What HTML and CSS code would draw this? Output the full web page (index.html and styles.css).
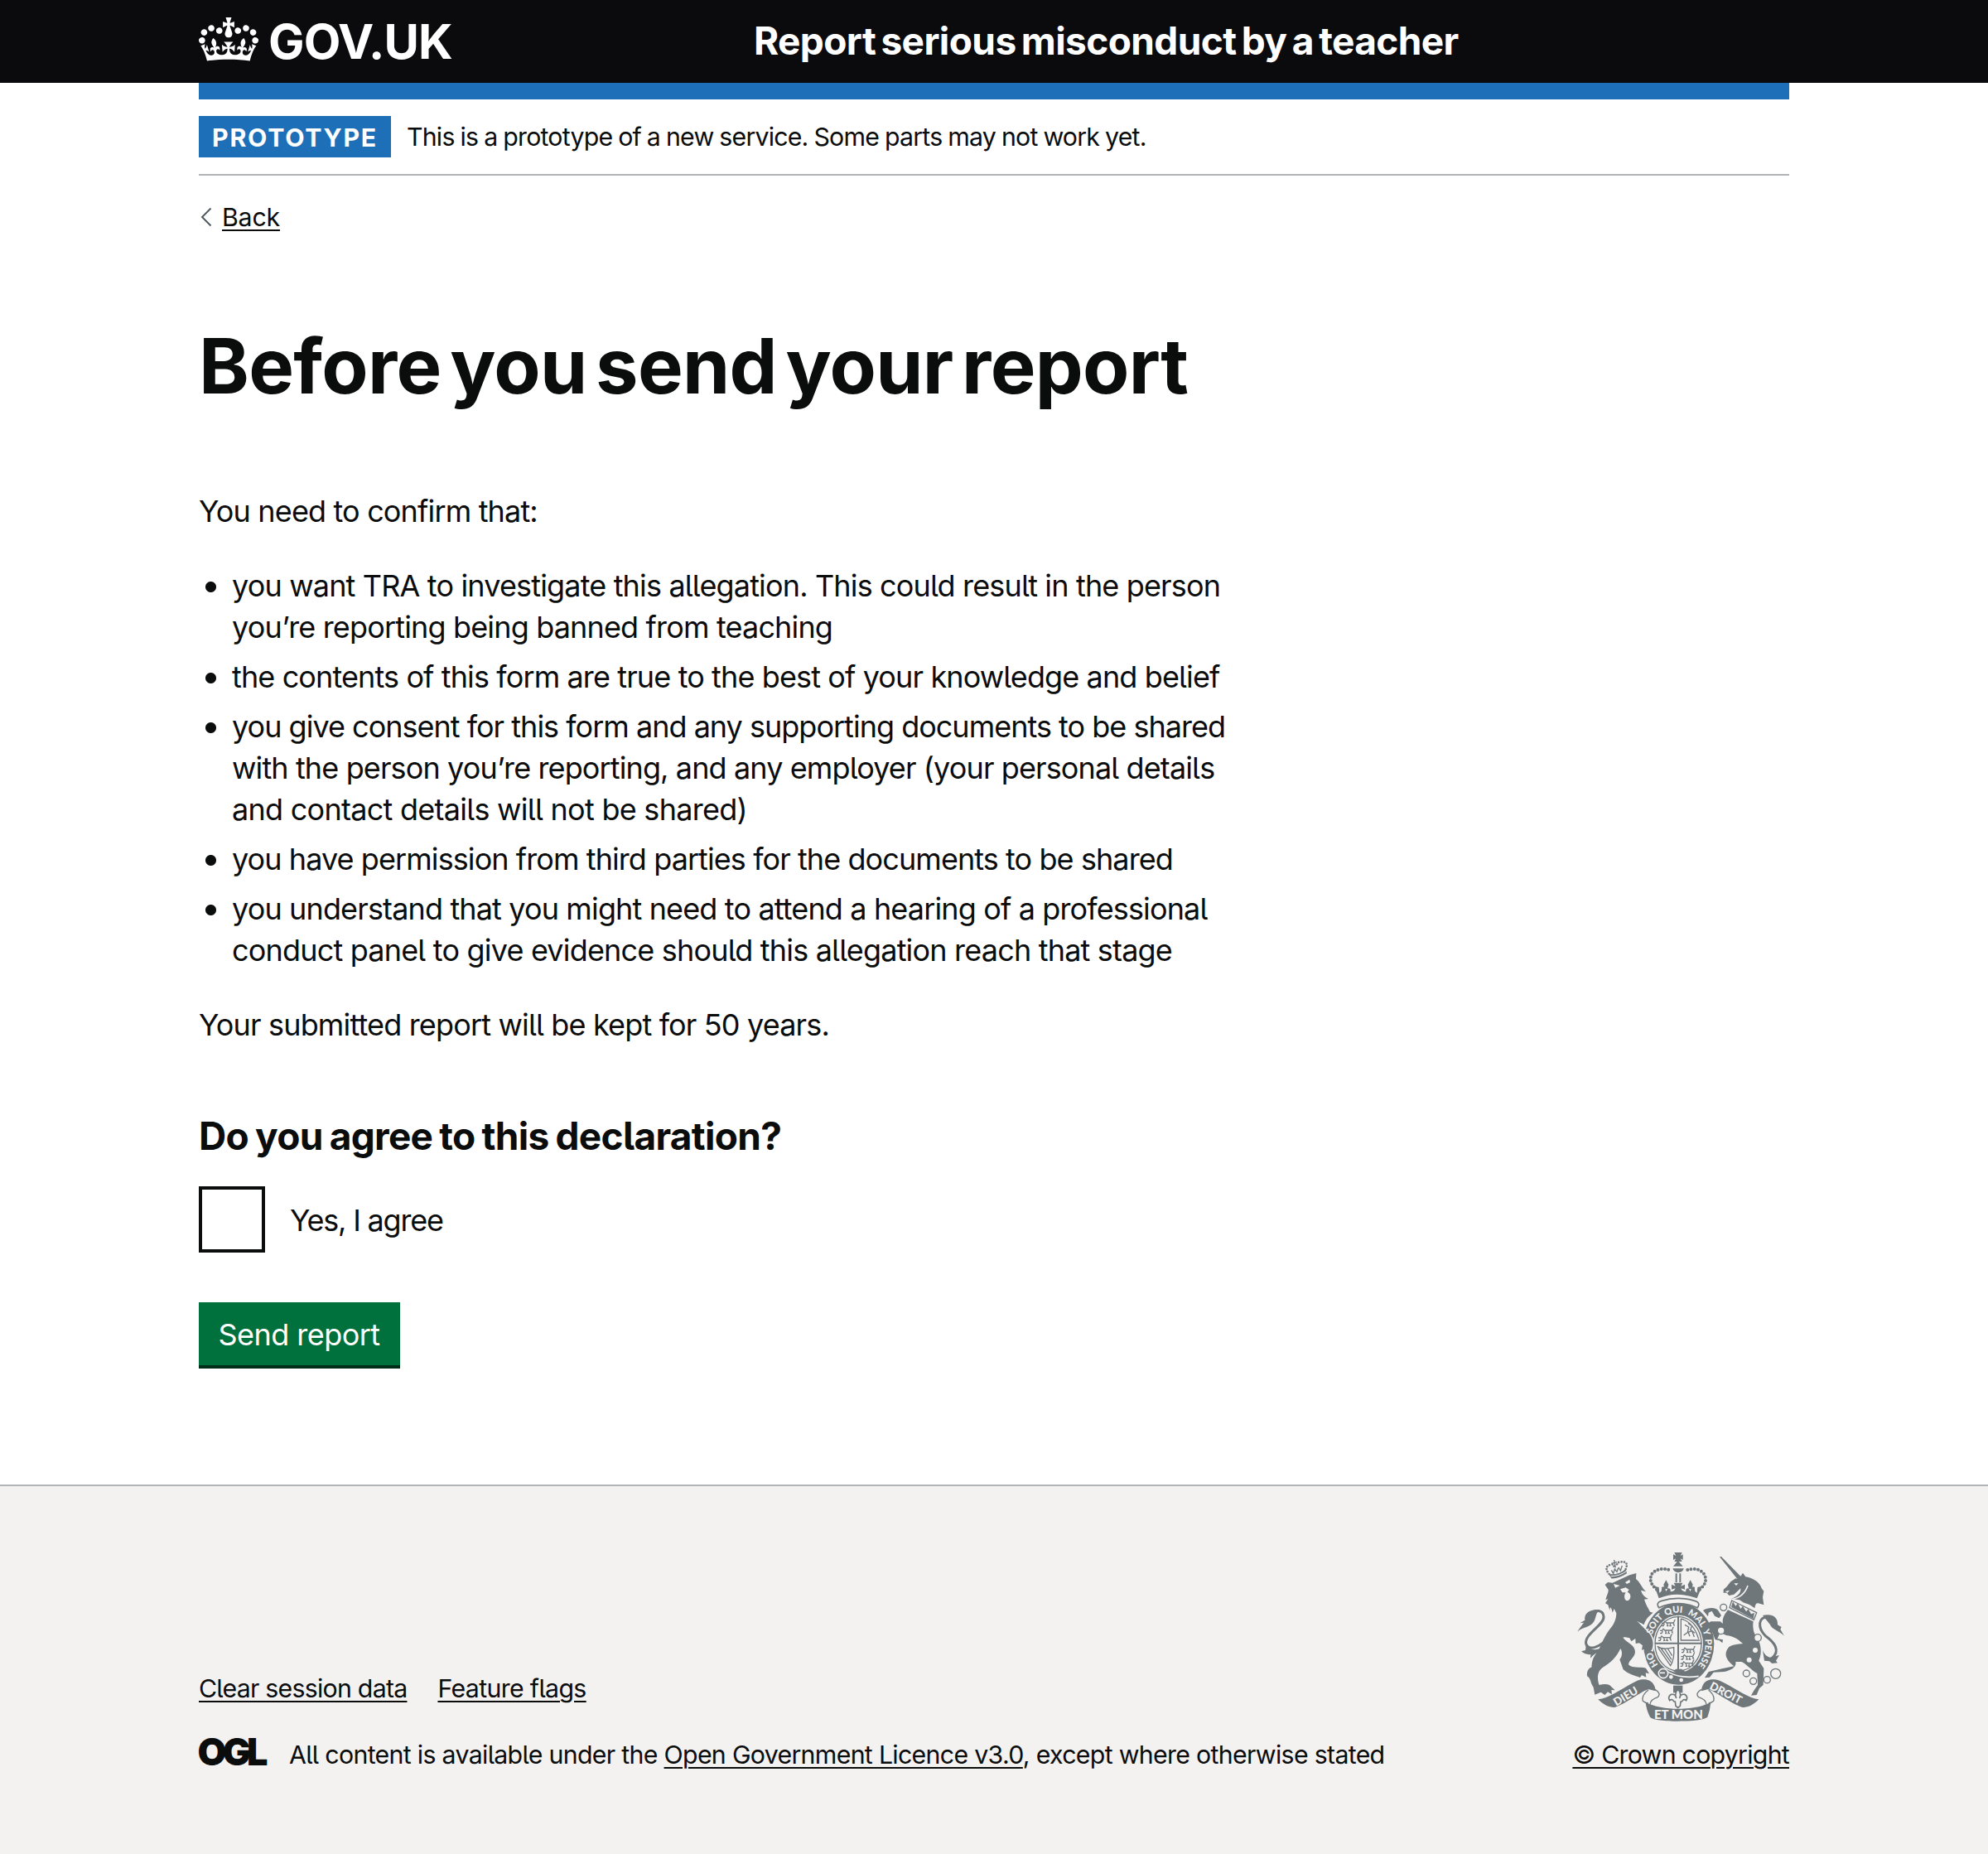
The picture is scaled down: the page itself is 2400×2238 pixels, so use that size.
FILE: index.html
```
<!DOCTYPE html>
<html lang="en">
<head>
<meta charset="utf-8">
<title>Before you send your report – Report serious misconduct by a teacher</title>
<link rel="stylesheet" href="styles.css">
</head>
<body>
<header class="header">
  <div class="container header-inner">
    <a class="logo" href="#">
      <svg class="crown" viewBox="0 0 132 97" aria-hidden="true"><path fill="currentColor" fill-rule="evenodd" d="M25 30.2c3.5 1.5 7.7-.2 9.1-3.7 1.5-3.6-.2-7.8-3.9-9.2-3.6-1.4-7.6.3-9.1 3.9-1.4 3.5.3 7.5 3.9 9zM9 39.5c3.6 1.5 7.8-.2 9.2-3.7 1.5-3.6-.2-7.8-3.9-9.1-3.6-1.5-7.6.2-9.1 3.8-1.4 3.5.3 7.5 3.8 9zM4.4 57.2c3.5 1.5 7.7-.2 9.1-3.8 1.5-3.6-.2-7.7-3.9-9.1-3.5-1.5-7.6.3-9.1 3.8-1.4 3.5.3 7.6 3.9 9.1zm38.3-21.4c3.5 1.5 7.7-.2 9.1-3.8 1.5-3.6-.2-7.7-3.9-9.1-3.6-1.5-7.6.3-9.1 3.8-1.3 3.6.4 7.7 3.9 9.1zm64.4-5.6c-3.6 1.5-7.8-.2-9.1-3.7-1.5-3.6.2-7.8 3.8-9.2 3.6-1.4 7.7.3 9.2 3.9 1.3 3.5-.4 7.5-3.9 9zm15.9 9.3c-3.6 1.5-7.7-.2-9.1-3.7-1.5-3.6.2-7.8 3.7-9.1 3.6-1.5 7.7.2 9.2 3.8 1.5 3.5-.3 7.5-3.8 9zm4.7 17.7c-3.6 1.5-7.8-.2-9.2-3.8-1.5-3.6.2-7.7 3.9-9.1 3.6-1.5 7.7.3 9.2 3.8 1.3 3.5-.4 7.6-3.9 9.1zM89.3 35.8c-3.6 1.5-7.8-.2-9.2-3.8-1.4-3.6.2-7.7 3.9-9.1 3.6-1.5 7.7.3 9.2 3.8 1.4 3.6-.3 7.7-3.9 9.1zM69.7 17.7l8.9 4.7V9.3l-8.9 2.8c-.2-.3-.5-.6-.9-.9L72.4 0H59.6l3.5 11.2c-.3.3-.6.5-.9.9l-8.8-2.8v13.1l8.8-4.7c.3.3.6.7.9.9l-5 15.4v.1c-.2.8-.4 1.6-.4 2.4 0 4.1 3.1 7.5 7 8.1h.2c.3 0 .7.1 1 .1.4 0 .7 0 1-.1h.2c4-.6 7.1-4.1 7.1-8.1 0-.8-.1-1.7-.4-2.4V34l-5.1-15.4c.4-.2.7-.6 1-.9zM66 92.8c16.9 0 32.8 1.1 47.1 3.2 4-16.9 8.9-26.7 14-33.5l-9.6-3.4c1 4.9 1.1 7.2 0 10.2-1.5-1.4-3-4.3-4.2-8.7L108.6 76c2.8-2 5-3.2 7.5-3.3-4.4 9.4-10 11.9-13.6 11.2-4.3-.8-6.3-4.6-5.6-7.9 1-4.7 5.7-5.9 8-.5 4.3-8.7-3-11.4-7.6-8.8 7.1-7.2 7.9-13.5 2.1-21.1-8 6.1-8.1 12.3-4.5 20.8-4.7-5.4-12.1-2.5-9.5 6.2 3.4-5.2 7.9-2 7.2 3.1-.6 4.3-6.4 7.8-13.5 7.2-10.3-.9-10.9-8-11.2-13.8 2.5-.5 7.1 1.8 11 7.3L80.2 60c-4.1 4.4-8 5.3-12.3 5.4 1.4-4.4 8-11.6 8-11.6H55.5s6.4 7.2 7.9 11.6c-4.2-.1-8-1-12.3-5.4l1.4 16.4c3.9-5.5 8.5-7.7 10.9-7.3-.3 5.8-.9 12.8-11.1 13.8-7.2.6-12.9-2.9-13.5-7.2-.7-5 3.8-8.3 7.1-3.1 2.7-8.7-4.6-11.6-9.4-6.2 3.7-8.5 3.6-14.7-4.6-20.8-5.8 7.6-5 13.9 2.2 21.1-4.7-2.6-11.9.1-7.7 8.8 2.3-5.5 7.1-4.2 8.1.5.7 3.3-1.3 7.1-5.7 7.9-3.5.7-9-1.8-13.5-11.2 2.5.1 4.7 1.3 7.5 3.3l-4.7-15.4c-1.2 4.4-2.7 7.2-4.3 8.7-1.1-3-.9-5.3 0-10.2l-9.5 3.4c5 6.9 9.9 16.7 14 33.5 14.8-2.1 30.8-3.2 47.7-3.2z"/></svg>
      <span class="logo-text">GOV.UK</span>
    </a>
    <a class="service-name" href="#">Report serious misconduct by a teacher</a>
  </div>
</header>

<div class="container">
  <div class="blue-bar"></div>
  <div class="phase-banner">
    <strong class="tag">PROTOTYPE</strong>
    <span class="phase-text">This is a prototype of a new service. Some parts may not work yet.</span>
  </div>
  <a class="back-link" href="#">
    <svg class="chevron" viewBox="0 0 14 24" aria-hidden="true"><path d="M12.5 1.5 2 12l10.5 10.5"/></svg>
    <span class="link back-text">Back</span>
  </a>

  <main class="main">
    <h1 class="title">Before you send your report</h1>
    <p class="para k84">You need to confirm that:</p>
    <ul class="list">
      <li><span class="k84">you want TRA to investigate this allegation. This could result in the person</span><br><span class="k84">you’re reporting being banned from teaching</span></li>
      <li><span class="k88">the contents of this form are true to the best of your knowledge and belief</span></li>
      <li><span class="k99">you give consent for this form and any supporting documents to be shared</span><br><span class="k88">with the person you’re reporting, and any employer (your personal details</span><br><span class="k73">and contact details will not be shared)</span></li>
      <li><span class="k92">you have permission from third parties for the documents to be shared</span></li>
      <li><span class="k86">you understand that you might need to attend a hearing of a professional</span><br><span class="k81">conduct panel to give evidence should this allegation reach that stage</span></li>
    </ul>
    <p class="para k84">Your submitted report will be kept for 50 years.</p>
    <form class="form">
      <h2 class="question">Do you agree to this declaration?</h2>
      <label class="checkbox"><span class="box"></span><span class="box-label">Yes, I agree</span></label>
      <button class="button" type="button">Send report</button>
    </form>
  </main>
</div>

<footer class="footer">
  <div class="container footer-inner">
    <div class="footer-meta">
      <nav class="footer-links">
        <a class="link l-clear" href="#">Clear session data</a>
        <a class="link l-flags" href="#">Feature flags</a>
      </nav>
      <div class="licence">
        <svg class="ogl" viewBox="0 0 82 34" role="img" aria-label="OGL"><text x="-1.5" y="33.3" textLength="85" lengthAdjust="spacing">OGL</text></svg>
        <span class="licence-text">All content is available under the <a class="link" href="#">Open Government Licence v3.0</a>, except where otherwise stated</span>
      </div>
    </div>
    <a class="copyright" href="#">
      <svg class="crest" viewBox="72 72 750 612" aria-hidden="true">
        <defs>
          <path id="motto" d="M438 516A98 113 0 0 1 340 403A98 113 0 0 1 438 290A98 113 0 0 1 536 403A98 113 0 0 1 438 516"/>
          <path id="passant" class="s4" d="M2 14h8l4-6 6 5h22l6 5M12 16l-4 8h-6M22 15l3 9h-5M34 16l-2 8h6M44 18l5 6M42 14c10-2 2-12 10-12M18 13h26"/>
        </defs>
        <!-- lion -->
        <path class="f" d="M173 189L183 180 200 182 262 154 286 147 285 168C299 178 305 198 321 214L303 209C307 224 316 234 330 240L315 242C321 262 330 274 336 287L347 290C332 302 318 316 314 334L288 320 332 368C346 386 349 405 341 427L331 418 327 432 317 420 307 425 309 408 297 400 284 402 283 384 268 394 262 382 243 378 256 373 238 380C254 401 281 405 282 432 282 452 258 462 258 478 270 492 300 486 321 491L333 511 320 508 322 524 306 516 300 525C280 518 256 512 239 496L226 460C236 448 236 430 229 420 215 450 195 470 163 490 144 504 144 532 152 552Q176 546 190 553L209 571 196 570 198 586 183 577 172 588 158 578 136 587 131 560C119 545 124 530 108 520 106 505 112 490 124 488 126 450 140 440 150 425 165 390 175 370 190 350 207 333 214 310 214 292L206 276 200 290C196 272 192 264 190 282L184 262 174 256 184 240 175 244C178 228 186 218 185 207Z"/>
        <path class="b" d="M204 186l23 6-17 8zM246 180l16-10 2 10-12 6zM228 205l20-6 12 8-6 8c16 6 14 28 0 32-12 0-14-20-6-30l-12 0z"/>
        <path class="f" d="M186 150q35 5 62-18l4 16q-30 20-56 18z"/><path class="bs thin" d="M194 158q32 0 56-18"/>
        <path class="dots small" d="M188 150Q166 124 194 116 204 112 206 124"/><path class="dots small" d="M248 132Q260 104 232 106 216 106 216 118"/>
        <path class="s4" d="M206 99l5 28M196 112l20-5M196 136l7 12 6-18M222 126l7 12 6-18M208 132l8 10 5-14"/>
        <path class="s9" d="M192 372C160 415 112 432 104 402 98 366 172 334 168 304 166 280 142 280 126 290"/>
        <path class="f" d="M154 279C118 276 96 292 100 317L82 328 96 326 72 359C92 340 122 344 134 320 142 304 138 294 154 279zM104 410L102 426 87 430Q104 444 121 441L120 455Q136 436 158 430L160 418Q132 432 104 410z"/>
        <!-- unicorn -->
        <path class="f" d="M588 88L594 87 664 158 672 146 682 160C712 164 736 184 740 202L748 212 744 234 748 262 736 258C722 252 718 256 715 274 702 262 690 258 676 254L660 244 630 240C650 232 666 222 664 202L640 224 622 228 614 218 602 218 602 206 614 196 628 178 646 166 652 168z"/>
        <path class="b" d="M640 184l16 0-8 8zM608 213l16-4-7 9z"/><path class="bs" d="M632 242q44-8 58-50"/>
        <path class="f" d="M618 280L710 322C706 350 714 372 728 386 742 420 738 446 730 464L748 492 746 552 732 564 722 588 702 590 712 572 726 552 724 510C702 498 690 480 668 468L646 468C650 488 628 500 604 504L566 506 552 524 534 526 548 504 600 492 640 484C612 462 600 440 622 414 640 402 668 404 672 402 652 384 640 376 612 372L590 362 580 384 600 388 598 400 586 390 572 388 562 362 544 330 556 322 590 322 600 330C596 312 606 296 618 280zM528 282C550 268 578 272 584 284L594 300 586 310 570 302 560 284 548 290 546 304z"/>
        <path class="s4" d="M632 246L722 290 712 316 624 272z"/><path class="f" d="M630 270l6-20 10 16 8-10 10 20 8-10 12 20 8-9 10 18 12-4-4 22z"/>
        <path class="s9" d="M776 456C812 428 784 396 756 376 724 346 726 302 766 306"/>
        <path class="f" d="M744 300C778 292 800 306 798 334L812 342 808 350 822 374C806 356 778 352 770 332zM744 426Q752 448 770 452L804 444 792 464 798 472 778 474 768 466 750 464z"/>
        <g class="spot"><circle cx="602" cy="271" r="12"/><circle cx="593" cy="355" r="13"/><circle cx="726" cy="381" r="13"/><circle cx="685" cy="510" r="12"/><circle cx="710" cy="538" r="12"/><circle cx="760" cy="533" r="12"/><circle cx="791" cy="511" r="18"/></g>
        <g class="b"><circle cx="717" cy="426" r="9"/><circle cx="695" cy="461" r="9"/></g>
        <!-- garter and shield -->
        <ellipse class="f" cx="440" cy="403" rx="128" ry="148"/>
        <ellipse class="b" cx="438" cy="403" rx="90" ry="104"/>
        <ellipse class="s4" cx="438" cy="403" rx="84" ry="98"/>
        <path class="s6" d="M438 302V502M352 401H524"/>
        <use href="#passant" x="376" y="314"/><use href="#passant" x="370" y="341"/><use href="#passant" x="364" y="367"/>
        <use href="#passant" x="448" y="410"/><use href="#passant" x="446" y="435"/><use href="#passant" x="444" y="460"/>
        <path class="s4" d="M448 312V390H516M448 312Q494 324 512 386M462 334l14 8-4 20 16-6 8 22M474 328l14 10-6 14 16 12M458 372l16-12 6 16"/>
        <path class="s4" d="M362 412q20 14 60 4c2 24 0 48-12 66l-44-64M376 420l36 50M388 420l26 40M400 420l16 26"/>
        <path class="f" d="M420 502l10-8h20l14 10-24 8z"/>
        <path class="bs" d="M386 496Q440 532 512 520"/>
        <path class="paw" d="M300 330L336 368C350 388 352 408 343 430"/>
        <path class="f" d="M290 322L334 366C348 386 350 406 342 427L331 418 327 432 317 420 307 425 309 408 297 398 290 380z"/>
        <g class="motto"><text><textPath href="#motto" startOffset="84">HO</textPath></text><text><textPath href="#motto" startOffset="199">SOIT</textPath></text><text><textPath href="#motto" startOffset="285">QUI</textPath></text><text><textPath href="#motto" startOffset="365">MAL</textPath></text><text><textPath href="#motto" startOffset="447">Y</textPath></text><text><textPath href="#motto" startOffset="480">PENSE</textPath></text></g>
        <g class="b"><circle cx="412" cy="523" r="7"/><circle cx="449" cy="534" r="7"/></g>
        <circle class="buckle" cx="384" cy="510" r="17"/><path class="bs" d="M372 508h18"/>
        <!-- royal crown -->
        <g class="f"><path d="M430 84l-6-12h28l-6 12 9-5v20l-9-5 6 11h-28l6-11-10 5V79zM420 122l14-17h6l15 17zM418 130h40q-2 14-20 15-16-1-20-15z"/><path d="M428 148h6v32h-6zM442 148h6v32h-6zM394 172l9 16-4 16h-10l-4-16zM482 172l9 16-4 16h-10l-4-16z"/>
        <path d="M352 194l16 4 2 20q10-2 8-20 10-6 12 2l4 14 6-12q12-2 10 12 14 0 18-12l-14 4v-18l14 6-6-12h32l-6 12 14-6v18l-14-4q4 12 18 12-2-14 10-12l6 12 4-14q4-8 12-2-2 18 8 20l2-20 16-4-18 44q-76-28-138 0z"/></g>
        <path class="dots" d="M360 206Q326 178 344 148 368 122 414 138M516 206Q550 178 530 148 508 122 462 138"/>
        <path class="pillow" d="M376 248Q438 228 500 248 520 254 508 272 440 242 368 272 356 254 376 248z"/>
        <!-- ribbon -->
        <path class="f" d="M148 604C190 600 240 560 290 536 328 524 354 540 356 574L332 568C310 570 250 620 210 632 188 636 166 622 148 604zM730 604C690 600 640 560 588 536 548 524 524 540 522 574L544 568C566 570 630 620 668 632 692 636 712 622 730 604zM320 614C380 646 500 646 556 614Q554 640 544 668C520 688 354 688 336 668Q322 640 320 614z"/>
        <path class="s4" d="M354 568q24 14 10 28-26 8-28 26M330 570q-26 20-20 40 8 8 20 8M522 568q-24 14-10 28 26 8 28 26M548 570q24 20 18 40-8 8-18 8"/>
        <g class="ribbon-text"><text transform="translate(214 629)rotate(-31)">DIEU</text><text transform="translate(549 565)rotate(27)">DROIT</text><text class="mon" transform="translate(351 676)">ET MON</text></g>
        <path class="f" d="M420 554h34v26h-34z"/><path class="fleur" d="M437 566q14 18 6 34 2-16 18-14 14 8 6 22-8-8-16 4h-4l-2 16-8 6-8-6-2-16h-4q-8-12-16-4-8-14 6-22 16-2 18 14-8-16 6-34z"/>
      </svg>
      <span class="link copyright-text">© Crown copyright</span>
    </a>
  </div>
</footer>
</body>
</html>
```
FILE: styles.css
```
* { box-sizing: border-box; }
body {
  margin: 0;
  background: #fff;
  color: #0b0c0c;
  font: 400 36px/50px Inter, "Liberation Sans", sans-serif;
  font-feature-settings: "cv05";
}
h1, h2, p, ul { margin: 0; }
a { color: inherit; text-decoration: none; }
.container { width: 1920px; margin: 0 auto; }
.link {
  text-decoration: underline;
  text-decoration-thickness: 2px;
  text-underline-offset: 4px;
}

/* Letter fitting for running text */
.k73 { letter-spacing: -0.73px; }
.k81 { letter-spacing: -0.81px; }
.k84 { letter-spacing: -0.84px; }
.k86 { letter-spacing: -0.86px; }
.k88 { letter-spacing: -0.88px; }
.k92 { letter-spacing: -0.92px; }
.k99 { letter-spacing: -0.99px; }

.header { height: 100px; background: #0b0b0d; color: #fff; font-weight: 700; }
.header-inner { display: grid; grid-template-columns: 670px 1fr; }
.logo { display: flex; height: 100px; padding-top: 21px; }
.crown { width: 72px; height: 53px; }
.logo-text { margin-left: 12px; font-size: 58px; line-height: 58px; letter-spacing: -0.9px; }
.service-name { padding-top: 19px; font-size: 46px; line-height: 60px; letter-spacing: -0.6px; word-spacing: -4px; white-space: nowrap; }

.blue-bar { height: 20px; background: #1d70b8; }
.phase-banner {
  display: flex;
  align-items: center;
  gap: 19px;
  padding: 20px 0;
  border-bottom: 2px solid #b1b4b6;
  font-size: 30.3px;
}
.tag {
  width: 232px;
  height: 50px;
  padding: 1px 16px 0;
  background: #1d70b8;
  color: #fff;
  font-weight: 700;
  letter-spacing: 1.75px;
}
.phase-text { line-height: 40px; letter-spacing: -0.8px; word-spacing: -0.8px; white-space: nowrap; }

.back-link {
  display: flex;
  width: max-content;
  margin-top: 30px;
  padding-left: 2px;
  font-size: 30.3px;
  line-height: 40px;
}
.chevron { width: 14px; height: 24px; margin: 8px 12px 0 0; fill: none; stroke: #505a5f; stroke-width: 2; }
.back-text { letter-spacing: -0.2px; }

.main { padding: 110px 0 140px; }
.title { margin-bottom: 100px; font-size: 92px; line-height: 100px; letter-spacing: -0.7px; word-spacing: -10.5px; }
.para { margin-bottom: 40px; }
.list { margin-bottom: 40px; padding: 0; white-space: nowrap; list-style: none; }
.list li {
  margin-bottom: 10px;
  padding-left: 40px;
  background: radial-gradient(circle at 6.5px 6.5px, #0b0c0c 6px, transparent 7px) 8px 20px no-repeat;
}
.list li:last-child { margin-bottom: 0; }
.form { padding-top: 39px; }
.question { margin-bottom: 31px; font-size: 46px; line-height: 60px; letter-spacing: -0.7px; word-spacing: -2.2px; }
.checkbox { display: flex; align-items: center; gap: 30px; width: max-content; }
.box { width: 80px; height: 80px; border: 4px solid #0b0c0c; }
.box-label { padding-top: 2px; letter-spacing: -1.2px; }
.button {
  display: block;
  width: 243px;
  height: 80px;
  margin-top: 60px;
  padding: 0 1px 0 0;
  border: 0;
  border-bottom: 4px solid #002d18;
  background: #00703c;
  color: #fff;
  font: inherit;
  font-feature-settings: inherit;
  line-height: 78px;
  letter-spacing: -0.55px;
}

.footer { height: 446px; padding-top: 80px; border-top: 2px solid #b1b4b6; background: #f3f2f1; font-size: 30.3px; line-height: 40px; }
.footer-inner { display: flex; justify-content: space-between; align-items: flex-end; }
.footer-links { display: flex; gap: 37px; margin-bottom: 40px; }
.l-clear { letter-spacing: -0.76px; }
.l-flags { letter-spacing: -0.65px; }
.licence { display: flex; }
.ogl { width: 82px; height: 34px; margin-right: 27px; overflow: visible; }
.ogl text { font: 900 45px Inter, sans-serif; fill: #0b0c0c; }
.licence-text { letter-spacing: -0.69px; white-space: nowrap; }
.copyright { display: flex; flex-direction: column; align-items: center; }
.crest { width: 250px; height: 204px; margin-bottom: 20px; }
.copyright-text { letter-spacing: -0.74px; white-space: nowrap; }

/* Royal coat of arms */
.f { fill: #6f777b; }
.b { fill: #f3f2f1; }
.bs { fill: none; stroke: #f3f2f1; stroke-width: 5; }
.bs.thin { stroke-width: 3; }
.s4, .s6, .s9 { fill: none; stroke: #6f777b; }
.s4 { stroke-width: 4; }
.s6 { stroke-width: 6; }
.s9 { stroke-width: 9; }
.dots { fill: none; stroke: #6f777b; stroke-linecap: round; stroke-dasharray: 0 13; stroke-width: 12; }
.dots.small { stroke-width: 8; stroke-dasharray: 0 10; }
.spot { fill: #f3f2f1; stroke: #6f777b; stroke-width: 4; }
.buckle { fill: #6f777b; stroke: #f3f2f1; stroke-width: 5; }
.paw { fill: none; stroke: #f3f2f1; stroke-width: 8; }
.pillow, .fleur { fill: #f3f2f1; stroke: #6f777b; stroke-width: 5; }
.motto text { font: 900 33px Lato, sans-serif; fill: #f3f2f1; }
.ribbon-text text { font: 900 40px Lato, sans-serif; fill: #f3f2f1; }
.ribbon-text .mon { font-size: 45px; }
```
